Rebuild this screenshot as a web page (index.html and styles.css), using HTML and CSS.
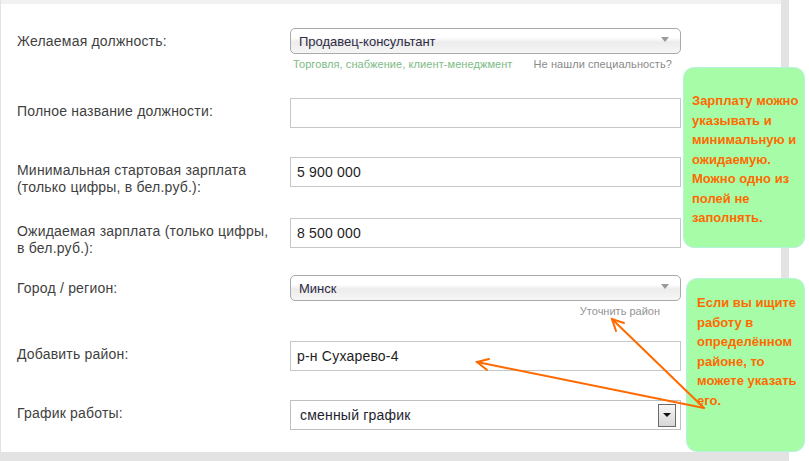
FILE: index.html
```html
<!DOCTYPE html>
<html lang="ru">
<head>
<meta charset="utf-8">
<title>Резюме</title>
<link rel="stylesheet" href="styles.css">
</head>
<body>
<div class="frame">
  <div class="panel">
    <div class="form">
      <div class="row row-position">
        <div class="label">Желаемая должность:</div>
        <div class="field">
          <div class="fancy-select"><span class="value">Продавец-консультант</span><span class="caret"></span></div>
          <div class="hints"><span class="hint-green">Торговля, снабжение, клиент-менеджмент</span><span class="hint-grey">Не нашли специальность?</span></div>
        </div>
      </div>
      <div class="row row-std">
        <div class="label">Полное название должности:</div>
        <div class="field"><div class="input"></div></div>
      </div>
      <div class="row row-min">
        <div class="label">Минимальная стартовая зарплата<br>(только цифры, в бел.руб.):</div>
        <div class="field"><div class="input">5 900 000</div></div>
      </div>
      <div class="row row-exp">
        <div class="label">Ожидаемая зарплата (только цифры,<br>в бел.руб.):</div>
        <div class="field"><div class="input">8 500 000</div></div>
      </div>
      <div class="row row-city">
        <div class="label">Город / регион:</div>
        <div class="field">
          <div class="fancy-select"><span class="value">Минск</span><span class="caret"></span></div>
          <div class="refine">Уточнить район</div>
        </div>
      </div>
      <div class="row row-std">
        <div class="label">Добавить район:</div>
        <div class="field"><div class="input">р-н Сухарево-4</div></div>
      </div>
      <div class="row">
        <div class="label">График работы:</div>
        <div class="field">
          <div class="plain-select"><span class="value">сменный график</span><span class="drop-btn"><span class="drop-tri"></span></span></div>
        </div>
      </div>
    </div>
  </div>
  <div class="note note-salary">Зарплату можно<br>указывать и<br>минимальную и<br>ожидаемую.<br>Можно одно из<br>полей не<br>заполнять.</div>
  <div class="note note-district">Если вы ищите<br>работу в<br>определённом<br>районе, то<br>можете указать<br>его.</div>
  <svg class="arrows" width="809" height="461" viewBox="0 0 809 461">
    <g fill="none" stroke="#ff6a00" stroke-width="2" stroke-linecap="round" stroke-linejoin="miter">
      <line x1="704" y1="408" x2="612" y2="319"/>
      <polyline points="616,331 612,319 624,323"/>
      <line x1="704" y1="408" x2="477" y2="362"/>
      <polyline points="487,370 477,362 489,359"/>
    </g>
  </svg>
</div>
</body>
</html>
```
FILE: styles.css
```css
html, body {
  margin: 0;
  padding: 0;
  background: #ffffff;
}
body {
  font-family: "Liberation Sans", Arial, sans-serif;
}
.frame {
  position: relative;
  width: 789px;
  height: 461px;
  background: #e3e3e3;
}
.panel {
  margin-left: 1px;
  width: 780px;
  height: 448px;
  border-top: 4px solid #f1f1f1;
  background: #ffffff;
}
.form {
  padding: 24px 0 0 16px;
}
.row {
  display: grid;
  grid-template-columns: 273px 391px;
  align-items: start;
}
.row-position { margin-bottom: 27px; }
.row-std { margin-bottom: 29px; }
.row-min { margin-bottom: 22px; }
.row-exp { margin-bottom: 18px; }
.row-city { margin-bottom: 23px; }
.label {
  font-size: 14px;
  line-height: 17px;
  letter-spacing: 0.2px;
  color: #3f3f3f;
  padding-top: 5px;
}
.input {
  box-sizing: border-box;
  height: 30px;
  border: 1px solid #c6c6c6;
  padding: 0 6px;
  font-size: 14px;
  line-height: 28px;
  letter-spacing: 0.2px;
  color: #1e1e1e;
}
.fancy-select {
  box-sizing: border-box;
  height: 26px;
  border: 1px solid #a9a9a9;
  border-radius: 5px;
  background: linear-gradient(#ffffff 0%, #ffffff 35%, #ececec 55%, #f6f6f6 100%);
  display: flex;
  align-items: center;
  justify-content: space-between;
  padding: 0 11px 0 8px;
  font-size: 13px;
  color: #2e2b45;
}
.caret {
  width: 0;
  height: 0;
  border-left: 4px solid transparent;
  border-right: 4px solid transparent;
  border-top: 5px solid #9a9a9a;
  margin-top: -3px;
}
.hints {
  display: flex;
  justify-content: space-between;
  padding: 4px 9px 0 3px;
  font-size: 11px;
  line-height: 13px;
  letter-spacing: 0.08px;
}
.hint-green { color: #7dbb84; }
.hint-grey { color: #8a8a8a; }
.refine {
  text-align: right;
  padding: 3px 21px 0 0;
  font-size: 11px;
  line-height: 14px;
  color: #949494;
}
.plain-select {
  box-sizing: border-box;
  height: 30px;
  border: 1px solid #c0c0c0;
  display: flex;
  align-items: center;
  justify-content: space-between;
  padding: 0 4px 0 9px;
  font-size: 14px;
  letter-spacing: 0.2px;
  color: #1e1e2e;
}
.drop-btn {
  box-sizing: border-box;
  width: 18px;
  height: 23px;
  border: 1px solid #6a6a6a;
  background: linear-gradient(#f7f7f7, #d6d6d6);
  display: flex;
  align-items: center;
  justify-content: center;
}
.drop-tri {
  width: 0;
  height: 0;
  border-left: 4px solid transparent;
  border-right: 4px solid transparent;
  border-top: 4px solid #111111;
}
.note {
  position: absolute;
  box-sizing: border-box;
  background: #a7fca7;
  border: 1px solid #b5f2dd;
  border-radius: 11px;
  font-family: "Liberation Sans", Arial, sans-serif;
  font-weight: bold;
  font-size: 13px;
  line-height: 19.5px;
  color: #ff6a00;
}
.note-salary {
  left: 683px;
  top: 67px;
  width: 122px;
  height: 181px;
  padding: 23px 0 0 8px;
}
.note-district {
  left: 686px;
  top: 278px;
  width: 119px;
  height: 174px;
  padding: 14px 0 0 10px;
}
.arrows {
  position: absolute;
  left: 0;
  top: 0;
  pointer-events: none;
}
```
